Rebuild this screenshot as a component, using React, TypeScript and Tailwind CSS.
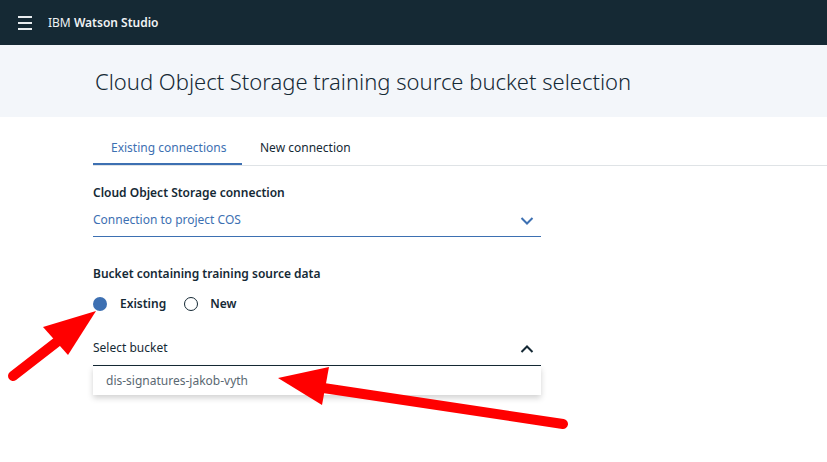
import React from "react";

const font = { fontFamily: '"Noto Sans", "Open Sans", sans-serif' };

export default function App() {
  return (
    <div className="relative w-[827px] h-[462px] overflow-hidden bg-white text-[#152935]" style={font}>
      {/* Header */}
      <div className="h-[45px] bg-[#152934] flex items-center">
        <div className="w-[48px] flex justify-center pl-[1px]">
          <div className="flex flex-col gap-[4px] w-[14px]">
            <div className="h-[2px] bg-[#e8ecef]" />
            <div className="h-[2px] bg-[#e8ecef]" />
            <div className="h-[2px] bg-[#e8ecef]" />
          </div>
        </div>
        <div className="text-[12px] text-[#f0f3f5]">
          IBM <span className="font-semibold">Watson Studio</span>
        </div>
      </div>

      {/* Title band */}
      <div className="h-[72px] bg-[#f3f6fa] flex items-center pl-[95px]">
        <h1 className="text-[22px] font-light text-[#152935] leading-none pb-[1px]">
          Cloud Object Storage training source bucket selection
        </h1>
      </div>

      {/* Tabs */}
      <div className="pl-[93px] pt-[17px]">
        <div className="flex border-b border-[#dfe3e6]">
          <div className="w-[149px] pl-[18px] h-[31px] text-[12px] text-[#3d70b2] border-b-2 border-[#3d70b2] -mb-[1px] flex items-start pt-[5px]">
            Existing connections
          </div>
          <div className="pl-[18px] h-[31px] text-[12px] text-[#152935] flex items-start pt-[5px]">
            New connection
          </div>
        </div>

        {/* COS connection */}
        <div className="w-[448px] pt-[18px]">
          <div className="text-[12px] font-semibold leading-[18px]">Cloud Object Storage connection</div>
          <div className="mt-[7px] h-[28px] border-b border-[#3d70b2] flex items-start justify-between">
            <span className="text-[12px] text-[#3d70b2] leading-[18px] pt-[2px]">Connection to project COS</span>
            <svg width="14" height="10" viewBox="0 0 14 10" className="mr-[7px] mt-[7px]">
              <path d="M1.5 2 L7 7.5 L12.5 2" fill="none" stroke="#3d70b2" strokeWidth="2" />
            </svg>
          </div>

          {/* Bucket */}
          <div className="mt-[28px] text-[12px] font-semibold leading-[18px]">Bucket containing training source data</div>
          <div className="mt-[13px] flex items-center h-[16px]">
            <div className="w-[14px] h-[14px] rounded-full bg-[#3d70b2]" />
            <span className="ml-[13px] text-[12px] font-semibold">Existing</span>
            <div className="ml-[18px] w-[14px] h-[14px] rounded-full border-[1.5px] border-[#152935] bg-white" />
            <span className="ml-[12px] text-[12px] font-semibold">New</span>
          </div>

          <div className="mt-[26px] h-[28px] border-b border-[#152935] flex items-start justify-between">
            <span className="text-[12px] text-[#152935] leading-[18px] pt-[1px]">Select bucket</span>
            <svg width="14" height="10" viewBox="0 0 14 10" className="mr-[7px] mt-[6px]">
              <path d="M1.5 8 L7 2.5 L12.5 8" fill="none" stroke="#152935" strokeWidth="2" />
            </svg>
          </div>
          <div className="h-[29px] bg-white shadow-[0_3px_6px_rgba(0,0,0,0.18)] flex items-center pl-[13px]">
            <span className="text-[12px] text-[#5a6872]">dis-signatures-jakob-vyth</span>
          </div>
        </div>
      </div>

      {/* Annotation arrows */}
      <svg className="absolute inset-0 pointer-events-none" width="827" height="462" viewBox="0 0 827 462">
        <line x1="13" y1="376" x2="62" y2="338" stroke="#ff0000" strokeWidth="10" strokeLinecap="round" />
        <polygon points="96,311 43,327 68,355" fill="#ff0000" />
        <line x1="563" y1="424" x2="310" y2="386" stroke="#ff0000" strokeWidth="10" strokeLinecap="round" />
        <polygon points="278,378 329,367 322,405" fill="#ff0000" />
      </svg>
    </div>
  );
}
